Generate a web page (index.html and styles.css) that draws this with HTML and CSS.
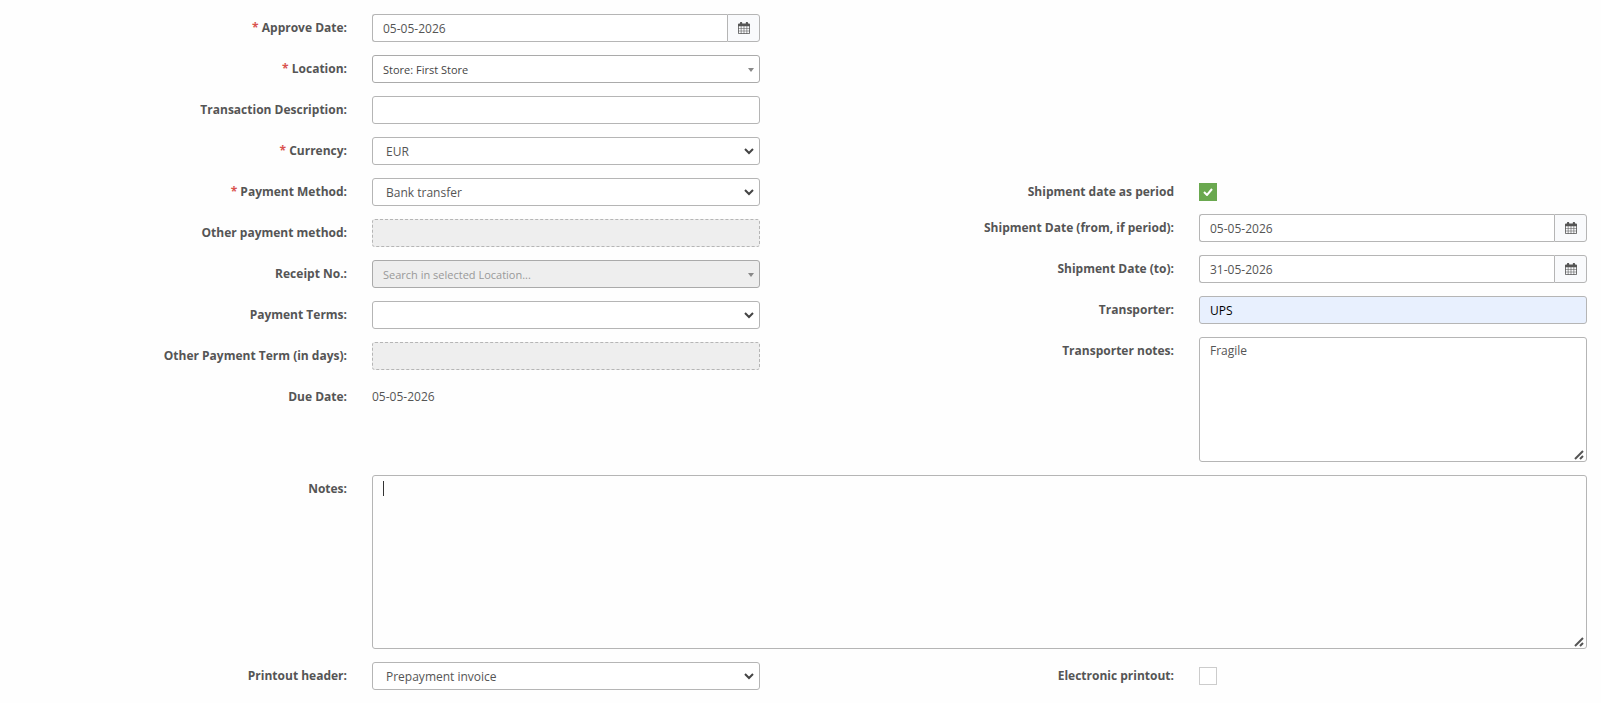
FILE: index.html
```html
<!DOCTYPE html>
<html lang="en">
<head>
    <meta charset="UTF-8">
    <title>Prepayment invoice</title>
    <link rel="stylesheet" href="styles.css">
</head>
<body>
<svg class="sprite" aria-hidden="true">
    <symbol id="icon-calendar" viewBox="0 0 12 12">
        <path fill-rule="evenodd" d="M1 1.500h1V1a1 1 0 0 1 2.200 0v.500h3.600V1A1 1 0 0 1 10 1v.500h1a1 1 0 0 1 1 1V11a1 1 0 0 1-1 1H1a1 1 0 0 1-1-1V2.500a1 1 0 0 1 1-1zM.8 4.200v2h2v-2zM3.400 4.200v2h2.300v-2zM6.300 4.200v2h2.300v-2zM9.200 4.200v2h2v-2zM.8 6.800v2h2v-2zM3.400 6.800v2h2.300v-2zM6.300 6.800v2h2.300v-2zM9.200 6.800v2h2v-2zM.8 9.300v1.900h2V9.300zM3.400 9.300v1.900h2.300V9.300zM6.300 9.300v1.900h2.300V9.300zM9.200 9.300v1.900h2V9.300z"/>
    </symbol>
</svg>
<form class="invoice-form">
    <div class="columns">
        <div class="column">
            <div class="row">
                <label for="approveDate"><span class="required">*</span> Approve Date:</label>
                <div class="date-group">
                    <input class="field" type="text" id="approveDate" value="05-05-2026">
                    <button type="button" aria-label="Choose date"><svg class="icon"><use href="#icon-calendar"/></svg></button>
                </div>
            </div>
            <div class="row">
                <label for="location"><span class="required">*</span> Location:</label>
                <select class="field search-select" id="location">
                    <option>Store: First Store</option>
                </select>
            </div>
            <div class="row">
                <label for="description">Transaction Description:</label>
                <input class="field" type="text" id="description">
            </div>
            <div class="row">
                <label for="currency"><span class="required">*</span> Currency:</label>
                <select class="field" id="currency">
                    <option>EUR</option>
                </select>
            </div>
            <div class="row">
                <label for="paymentMethod"><span class="required">*</span> Payment Method:</label>
                <select class="field" id="paymentMethod">
                    <option>Bank transfer</option>
                </select>
            </div>
            <div class="row">
                <label for="otherMethod">Other payment method:</label>
                <input class="field" type="text" id="otherMethod" disabled>
            </div>
            <div class="row">
                <label for="receipt">Receipt No.:</label>
                <select class="field search-select" id="receipt" disabled>
                    <option>Search in selected Location...</option>
                </select>
            </div>
            <div class="row">
                <label for="paymentTerms">Payment Terms:</label>
                <select class="field" id="paymentTerms">
                    <option></option>
                </select>
            </div>
            <div class="row">
                <label for="otherTerm">Other Payment Term (in days):</label>
                <input class="field" type="text" id="otherTerm" disabled>
            </div>
            <div class="row">
                <label for="dueDate">Due Date:</label>
                <output class="static" id="dueDate">05-05-2026</output>
            </div>
        </div>
        <div class="column shipment">
            <div class="row row-check">
                <label for="asPeriod">Shipment date as period</label>
                <input class="check" type="checkbox" id="asPeriod" checked>
            </div>
            <div class="row">
                <label for="dateFrom">Shipment Date (from, if period):</label>
                <div class="date-group">
                    <input class="field" type="text" id="dateFrom" value="05-05-2026">
                    <button type="button" aria-label="Choose date"><svg class="icon"><use href="#icon-calendar"/></svg></button>
                </div>
            </div>
            <div class="row">
                <label for="dateTo">Shipment Date (to):</label>
                <div class="date-group">
                    <input class="field" type="text" id="dateTo" value="31-05-2026">
                    <button type="button" aria-label="Choose date"><svg class="icon"><use href="#icon-calendar"/></svg></button>
                </div>
            </div>
            <div class="row">
                <label for="transporter">Transporter:</label>
                <input class="field autofilled" type="text" id="transporter" value="UPS">
            </div>
            <div class="row">
                <label for="transporterNotes">Transporter notes:</label>
                <textarea class="field transporter-notes" id="transporterNotes">Fragile</textarea>
            </div>
        </div>
    </div>
    <div class="row row-wide">
        <label for="notes">Notes:</label>
        <textarea class="field notes" id="notes" autofocus></textarea>
    </div>
    <div class="columns">
        <div class="row">
            <label for="header">Printout header:</label>
            <select class="field" id="header">
                <option>Prepayment invoice</option>
            </select>
        </div>
        <div class="row">
            <label for="electronic">Electronic printout:</label>
            <input class="check" type="checkbox" id="electronic">
        </div>
    </div>
</form>
</body>
</html>
```
FILE: styles.css
```css
* {
    box-sizing: border-box;
}

body {
    margin: 0;
    background-color: #fefefe;
    color: #555;
    font-family: "Open Sans", sans-serif;
    font-size: 12px;
}

.sprite {
    display: none;
}

.invoice-form {
    display: flex;
    flex-direction: column;
    gap: 13px;
    padding: 14px 14px 13px 0;
}

.columns {
    display: grid;
    grid-template-columns: 1fr 1fr;
    column-gap: 67px;
}

.column {
    display: flex;
    flex-direction: column;
    gap: 13px;
}

/* starts level with the fifth row on the left */
.shipment {
    padding-top: calc(4 * (28px + 13px));
}

.row {
    display: grid;
    grid-template-columns: 347fr 388fr;
    column-gap: 25px;
    align-items: start;
    min-height: 28px;
}

.row-check {
    min-height: 23px;
    height: 23px;
}

.row-wide {
    grid-template-columns: 347fr 1215fr;
}

label {
    font-weight: bold;
    line-height: 27px;
    text-align: right;
}

.required {
    color: #d9534f;
}

.field {
    width: 100%;
    min-width: 0;
    height: 28px;
    margin: 0;
    padding: 0 10px;
    border: 1px solid #b5b5b5;
    border-radius: 3px;
    background-color: #fff;
    color: #555;
    font-family: inherit;
    font-size: 12px;
    outline: none;
}

select.field {
    appearance: none;
    padding: 0 13px;
    background: #fff url("data:image/svg+xml,%3Csvg xmlns='http://www.w3.org/2000/svg' width='10' height='7'%3E%3Cpath fill='none' stroke='%23444' stroke-width='2' d='M1 1l4 4 4-4'/%3E%3C/svg%3E") no-repeat right 5px top 10px;
}

input.field:disabled {
    border-style: dashed;
    background-color: #eee;
}

select.search-select {
    padding: 1px 10px 0;
    border-color: #aaa;
    background: #fff url("data:image/svg+xml,%3Csvg xmlns='http://www.w3.org/2000/svg' width='6' height='4'%3E%3Cpath fill='%23888' d='M0 0h6L3 4z'/%3E%3C/svg%3E") no-repeat right 5px top 12px;
    color: #444;
    font-size: 11px;
}

select.search-select:disabled {
    background-color: #eee;
    color: #999;
    opacity: 1;
}

.date-group {
    display: flex;
}

.date-group .field {
    flex: 1;
    border-right: 0;
    border-radius: 3px 0 0 3px;
}

.date-group button {
    display: flex;
    align-items: center;
    justify-content: center;
    width: 33px;
    height: 28px;
    padding: 0;
    border: 1px solid #b5b5b5;
    border-radius: 0 3px 3px 0;
    background-color: #f9fafc;
    color: #555;
}

.icon {
    width: 12px;
    height: 12px;
    fill: currentColor;
}

.autofilled {
    background-color: #e8f0fe;
    color: #000;
}

textarea.field {
    display: block;
    padding: 4px 10px;
    line-height: 17px;
    resize: both;
}

textarea::-webkit-resizer {
    background: url("data:image/svg+xml,%3Csvg xmlns='http://www.w3.org/2000/svg' width='10' height='10'%3E%3Cpath fill='none' stroke='%23555' stroke-width='2' d='M1 9l8-8M6 9l3-3'/%3E%3C/svg%3E") no-repeat right 2px bottom 1px;
}

.transporter-notes {
    height: 125px;
}

.notes {
    height: 174px;
    background: linear-gradient(#333, #333) no-repeat 10px 5px / 1px 15px;
    caret-color: transparent;
}

.static {
    line-height: 27px;
}

.check {
    appearance: none;
    width: 18px;
    height: 18px;
    margin: 5px 0 0;
    border: 1px solid #ccc;
    background-color: #fff;
}

.check:checked {
    border-color: #6aa84f;
    background: #6aa84f url("data:image/svg+xml,%3Csvg xmlns='http://www.w3.org/2000/svg' width='10' height='8'%3E%3Cpath fill='none' stroke='%23fff' stroke-width='2' d='M1 4l3 3 5-6'/%3E%3C/svg%3E") no-repeat center;
}
```
